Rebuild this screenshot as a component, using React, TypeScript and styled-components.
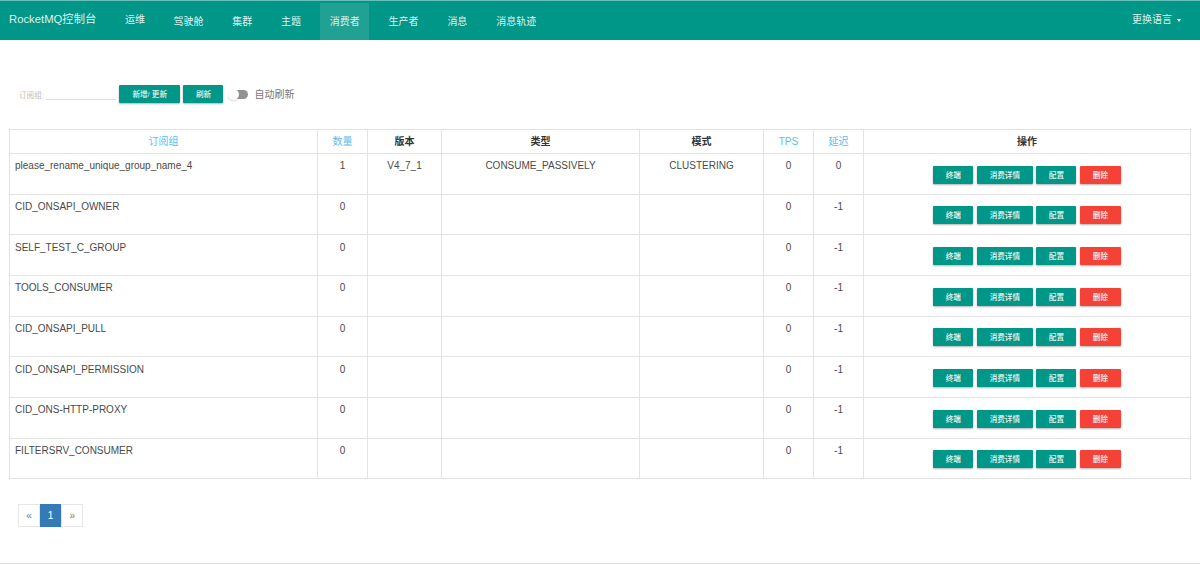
import React from 'react';
import styled, { createGlobalStyle } from 'styled-components';

const GlobalStyle = createGlobalStyle`
  * { box-sizing: border-box; }
  body {
    margin: 0;
    background: #fff;
    color: #4a4a4a;
    font-family: "Liberation Sans", Arial, "Noto Sans CJK SC", sans-serif;
    font-size: 10px;
  }
`;

const Page = styled.div`
  height: 564px;
  display: flex;
  flex-direction: column;
  overflow: hidden;
  border-bottom: 1px solid #e2e2e2;
`;

const Navbar = styled.nav`
  height: 40px;
  flex: none;
  display: flex;
  align-items: flex-start;
  background: #009688;
  border-top: 1px solid #66c0b7;
  color: #dff3f1;
`;

const Brand = styled.span`
  width: 103px;
  padding-left: 9px;
  font-size: 11.3px;
  line-height: 16px;
  margin-top: 10px;
  white-space: nowrap;
`;

const NavGroup = styled.div<{ $gap: number }>`
  display: flex;
  margin-left: ${(p) => p.$gap}px;
  gap: 10px;
`;

const NavItem = styled.a<{ $active?: boolean; $raised?: boolean }>`
  height: 37px;
  margin-top: ${(p) => (p.$raised ? 0 : 2)}px;
  padding: 0 9.4px;
  line-height: 38px;
  white-space: nowrap;
  background: ${(p) => (p.$active ? '#21a194' : 'transparent')};
`;

const Language = styled.span`
  margin-left: auto;
  margin-right: 19px;
  margin-top: 10.5px;
  line-height: 16px;
  display: flex;
  align-items: center;
  gap: 5px;
`;

const Caret = styled.i`
  border: 2.5px solid transparent;
  border-top: 3px solid #fff;
  border-bottom: 0;
  margin-top: 2px;
`;

const Toolbar = styled.div`
  display: flex;
  align-items: center;
  height: 20px;
  margin: 44px 0 0 19px;
`;

const FieldLabel = styled.label`
  width: 27px;
  font-size: 7.6px;
  color: #bdbdbd;
  white-space: nowrap;
`;

const Field = styled.input`
  width: 70px;
  height: 12px;
  border: 0;
  border-bottom: 1px solid #dedede;
  padding: 0;
  background: transparent;
  margin-right: 3.4px;
`;

const ToolbarButtons = styled.div`
  display: flex;
  gap: 3.5px;
`;

const Button = styled.button<{ $width: number; $danger?: boolean }>`
  width: ${(p) => p.$width}px;
  height: 18px;
  flex: none;
  border: 0;
  border-radius: 1px;
  padding: 0;
  font-family: inherit;
  font-size: 7.6px;
  line-height: 19px;
  font-weight: 500;
  color: #e8f6f4;
  background: ${(p) => (p.$danger ? '#f44336' : '#009688')};
  box-shadow: 0 1px 2px rgba(0, 0, 0, 0.3);
  white-space: nowrap;
`;

const Actions = styled.div`
  display: flex;
  justify-content: center;
  gap: 3.8px;
`;

const Switch = styled.span`
  width: 20px;
  height: 14px;
  margin: 0 6px 0 5px;
  display: flex;
  align-items: center;
`;

const Thumb = styled.i`
  width: 11px;
  height: 11px;
  flex: none;
  border-radius: 50%;
  background: #fdfdfd;
  box-shadow: 0 1px 2px rgba(0, 0, 0, 0.16);
  z-index: 1;
`;

const Track = styled.i`
  width: 17px;
  height: 9px;
  flex: none;
  margin-left: -8px;
  border-radius: 5px;
  background: #929292;
`;

const SwitchLabel = styled.span`
  padding-bottom: 1px;
  color: #777;
`;

const Table = styled.div`
  margin: 25px 9px 0;
  width: 1182px;
  border: solid #e3e3e3;
  border-width: 1px 0 0 1px;
`;

const Row = styled.div<{ $head?: boolean }>`
  display: grid;
  grid-template-columns: 308px 50px 74px 198px 124px 50px 50px 327px;
  height: ${(p) => (p.$head ? 24.2 : 40.64)}px;
`;

const Cell = styled.div<{ $left?: boolean }>`
  border: solid #e3e3e3;
  border-width: 0 1px 1px 0;
  padding: 5.2px 5px 0;
  line-height: 14px;
  text-align: ${(p) => (p.$left ? 'left' : 'center')};
  white-space: nowrap;
`;

const HeadCell = styled(Cell)<{ $sortable?: boolean }>`
  padding-top: 5px;
  font-weight: ${(p) => (p.$sortable ? 400 : 700)};
  color: ${(p) => (p.$sortable ? '#5bbcf5' : '#333')};
`;

const ActionCell = styled(Cell)`
  padding-top: 11.6px;
`;

const Pagination = styled.div`
  display: flex;
  margin: 24.4px 0 0 18px;
`;

const PageItem = styled.a<{ $active?: boolean }>`
  width: 22px;
  height: 23px;
  line-height: 21px;
  text-align: center;
  border: 1px solid ${(p) => (p.$active ? '#337ab7' : '#e6e6e6')};
  background: ${(p) => (p.$active ? '#337ab7' : '#fff')};
  color: ${(p) => (p.$active ? '#fff' : '#777')};

  & + & { margin-left: -0.4px; }
`;

const groups: string[][] = [
  ['please_rename_unique_group_name_4', '1', 'V4_7_1', 'CONSUME_PASSIVELY', 'CLUSTERING', '0', '0'],
  ...[
    'CID_ONSAPI_OWNER',
    'SELF_TEST_C_GROUP',
    'TOOLS_CONSUMER',
    'CID_ONSAPI_PULL',
    'CID_ONSAPI_PERMISSION',
    'CID_ONS-HTTP-PROXY',
    'FILTERSRV_CONSUMER',
  ].map((name) => [name, '0', '', '', '', '0', '-1']),
];

const headers: [string, boolean][] = [
  ['订阅组', true],
  ['数量', true],
  ['版本', false],
  ['类型', false],
  ['模式', false],
  ['TPS', true],
  ['延迟', true],
  ['操作', false],
];

const navItems = ['驾驶舱', '集群', '主题', '消费者', '生产者', '消息', '消息轨迹'];

export default function App() {
  return (
    <Page>
      <GlobalStyle />
      <Navbar>
        <Brand>RocketMQ控制台</Brand>
        <NavGroup $gap={12.5}>
          <NavItem $raised>运维</NavItem>
        </NavGroup>
        <NavGroup $gap={9.8}>
          {navItems.map((item) => (
            <NavItem key={item} $active={item === '消费者'}>
              {item}
            </NavItem>
          ))}
        </NavGroup>
        <Language>
          更换语言
          <Caret />
        </Language>
      </Navbar>
      <Toolbar>
        <FieldLabel>订阅组:</FieldLabel>
        <Field />
        <ToolbarButtons>
          <Button $width={60.6}>新增/ 更新</Button>
          <Button $width={40}>刷新</Button>
        </ToolbarButtons>
        <Switch>
          <Thumb />
          <Track />
        </Switch>
        <SwitchLabel>自动刷新</SwitchLabel>
      </Toolbar>
      <Table>
        <Row $head>
          {headers.map(([label, sortable]) => (
            <HeadCell key={label} $sortable={sortable}>
              {label}
            </HeadCell>
          ))}
        </Row>
        {groups.map((cells) => (
          <Row key={cells[0]}>
            {cells.map((value, i) => (
              <Cell key={i} $left={i === 0}>
                {value}
              </Cell>
            ))}
            <ActionCell>
              <Actions>
                <Button $width={40}>终端</Button>
                <Button $width={55.5}>消费详情</Button>
                <Button $width={40}>配置</Button>
                <Button $width={40.5} $danger>
                  删除
                </Button>
              </Actions>
            </ActionCell>
          </Row>
        ))}
      </Table>
      <Pagination>
        <PageItem>«</PageItem>
        <PageItem $active>1</PageItem>
        <PageItem>»</PageItem>
      </Pagination>
    </Page>
  );
}
